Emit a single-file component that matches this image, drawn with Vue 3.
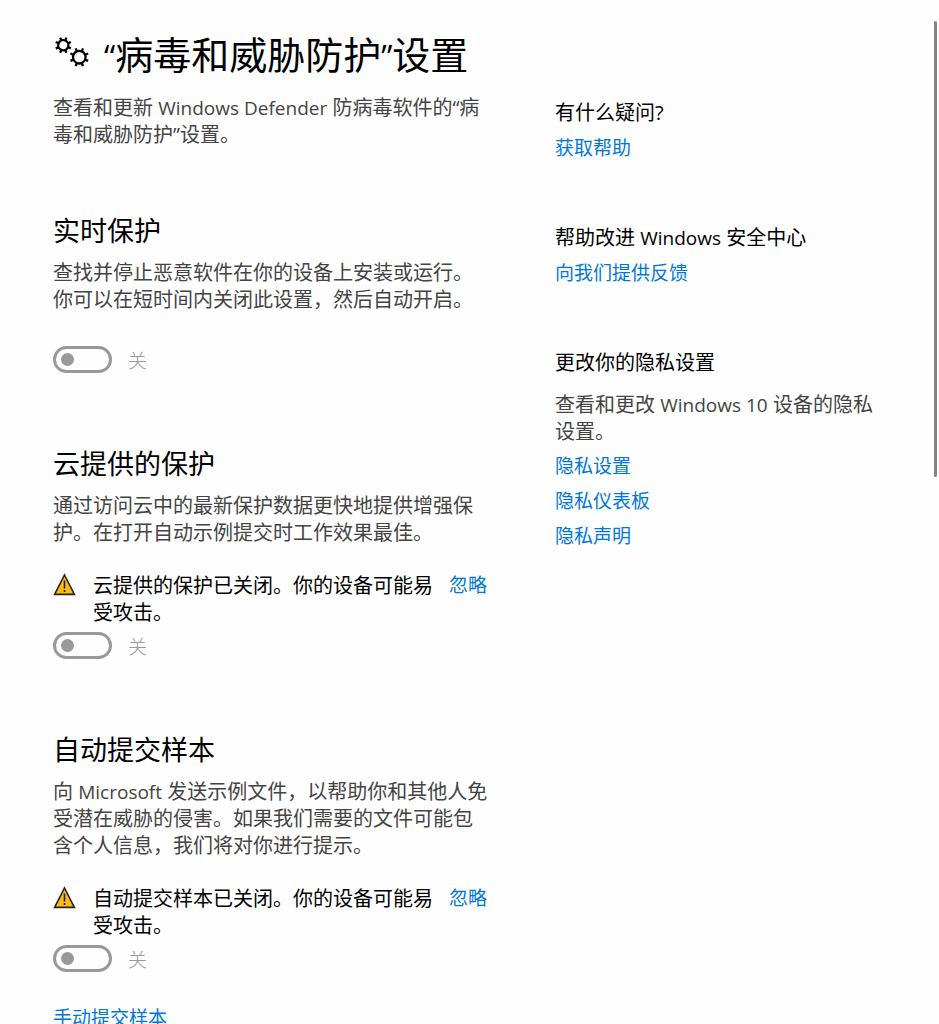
<script setup>
import { h, ref } from 'vue'

// Wraps Latin words so that they can be set slightly smaller than the Chinese text.
const MixedText = (props) =>
  props.text
    .split(/([A-Za-z][A-Za-z0-9 ]*[A-Za-z0-9])/)
    .filter(Boolean)
    .map((part) => (/^[A-Za-z]/.test(part) ? h('span', { class: 'latin' }, part) : part))
MixedText.props = ['text']

const gears = [
  { x: 10.3, y: 9.2, r: 5.1, outer: 8.2 },
  { x: 26.3, y: 21.2, r: 6.3, outer: 9.6 }
]

const sections = ref([
  {
    id: 'realtime',
    title: '实时保护',
    text: '查找并停止恶意软件在你的设备上安装或运行。你可以在短时间内关闭此设置，然后自动开启。',
    warning: '',
    on: false
  },
  {
    id: 'cloud',
    title: '云提供的保护',
    text: '通过访问云中的最新保护数据更快地提供增强保护。在打开自动示例提交时工作效果最佳。',
    warning: '云提供的保护已关闭。你的设备可能易受攻击。',
    on: false
  },
  {
    id: 'sample',
    title: '自动提交样本',
    text: '向 Microsoft 发送示例文件，以帮助你和其他人免受潜在威胁的侵害。如果我们需要的文件可能包含个人信息，我们将对你进行提示。',
    warning: '自动提交样本已关闭。你的设备可能易受攻击。',
    on: false,
    link: '手动提交样本'
  }
])

const asides = [
  { title: '有什么疑问?', links: ['获取帮助'] },
  { title: '帮助改进 Windows 安全中心', links: ['向我们提供反馈'] },
  {
    title: '更改你的隐私设置',
    text: '查看和更改 Windows 10 设备的隐私设置。',
    links: ['隐私设置', '隐私仪表板', '隐私声明']
  }
]
</script>

<template>
  <div class="window" lang="zh-CN">
    <div class="page">
      <main>
        <header>
          <h1>
            <svg class="gears" viewBox="0 0 37 36" aria-hidden="true">
              <g v-for="g in gears" :key="g.x" :transform="`translate(${g.x} ${g.y}) rotate(22.5)`">
                <circle :r="g.r" />
                <line v-for="n in 8" :key="n" :x1="g.r" y1="0" :x2="g.outer" y2="0" :transform="`rotate(${n * 45})`" />
              </g>
            </svg>
            <span><span class="quote">“</span>病毒和威胁防护<span class="quote">”</span>设置</span>
          </h1>
          <p><MixedText text="查看和更新 Windows Defender 防病毒软件的“病毒和威胁防护”设置。" /></p>
        </header>

        <section v-for="s in sections" :key="s.id" :class="{ first: s.id === 'realtime' }">
          <h2>{{ s.title }}</h2>
          <p><MixedText :text="s.text" /></p>
          <div v-if="s.warning" class="warning">
            <svg class="alert" viewBox="0 0 24 24" aria-hidden="true">
              <path class="tri" d="M11.5 3 L21.4 22.4 H1.6 Z" />
              <path class="mark" d="M11.5 8.5 V16.5 M11.5 18 V20" />
            </svg>
            <span class="message">{{ s.warning }}</span>
            <a href="#">忽略</a>
          </div>
          <label class="toggle" :class="{ close: s.warning }">
            <input v-model="s.on" type="checkbox" role="switch" :aria-label="s.title" />
            <span class="state">{{ s.on ? '开' : '关' }}</span>
          </label>
          <a v-if="s.link" class="more" href="#">{{ s.link }}</a>
        </section>
      </main>

      <aside>
        <section v-for="a in asides" :key="a.title">
          <h3><MixedText :text="a.title" /></h3>
          <p v-if="a.text"><MixedText :text="a.text" /></p>
          <a v-for="l in a.links" :key="l" href="#">{{ l }}</a>
        </section>
      </aside>
    </div>
    <div class="thumb"></div>
  </div>
</template>

<style>
body {
  margin: 0;
  background: #fefefe;
}
.latin {
  font-size: 19px;
  line-height: 20px;
}
</style>

<style scoped>
.window {
  position: relative;
  height: 100vh;
  overflow: hidden;
  font-family: "Open Sans", "Noto Sans CJK SC", sans-serif;
  font-size: 20px;
  line-height: 27px;
  color: #000;
}
.page {
  box-sizing: border-box;
  height: 100%;
  overflow-y: auto;
  scrollbar-width: none;
  display: grid;
  grid-template-columns: minmax(0, 439fr) minmax(0, 332fr);
  align-items: start;
  gap: 63px;
  padding: 30px 52px 0 53px;
}
h1,
h2,
h3,
p {
  margin: 0;
  font-weight: 400;
}
h1 {
  display: flex;
  align-items: center;
  gap: 14px;
  font-size: 38px;
  line-height: 48px;
  white-space: nowrap;
}
.quote {
  font-size: 32px;
  line-height: 40px;
}
.gears {
  flex: none;
  width: 37px;
  height: 36px;
  fill: none;
  stroke: #000;
  stroke-width: 2.3;
}
header p {
  margin-top: 16px;
}
p {
  color: #444;
}
main section {
  margin-top: 73px;
}
main section.first {
  margin-top: 65px;
}
h2 {
  margin-bottom: 10px;
  font-size: 27px;
  line-height: 36px;
}
.warning {
  display: flex;
  align-items: flex-start;
  margin-top: 26px;
}
.alert {
  flex: none;
  width: 24px;
  height: 24px;
  margin-right: 16px;
}
.tri {
  fill: #ffb90f;
  stroke: #222;
  stroke-width: 1.6;
}
.mark {
  stroke: #222;
  stroke-width: 1.6;
}
.message {
  flex: 0 1 340px;
  margin-right: 16px;
}
.warning a {
  flex: none;
}
.toggle {
  display: flex;
  align-items: center;
  gap: 16px;
  width: max-content;
  margin-top: 33px;
  font-size: 19px;
  color: #999;
}
.toggle.close {
  margin-top: 6px;
}
.state {
  padding-top: 3px;
  font-weight: 300;
  line-height: 24px;
}
.toggle input {
  appearance: none;
  box-sizing: border-box;
  display: flex;
  align-items: center;
  width: 59px;
  height: 27px;
  margin: 0;
  padding: 0 5px;
  border: 3px solid #999;
  border-radius: 14px;
}
.toggle input::before {
  content: "";
  width: 13px;
  height: 13px;
  border-radius: 50%;
  background: #999;
}
.toggle input:checked {
  justify-content: flex-end;
}
a {
  font-size: 19px;
  color: #0078d7;
  text-decoration: none;
}
.more {
  display: block;
  width: max-content;
  margin-top: 33px;
}
aside {
  display: grid;
  gap: 61px;
  padding-top: 68px;
}
aside section {
  display: flex;
  flex-direction: column;
  align-items: flex-start;
  gap: 8px;
}
h3 {
  font-size: 20px;
  line-height: 29px;
}
aside p {
  margin-top: 6px;
}
.thumb {
  position: absolute;
  top: 21px;
  right: 2px;
  width: 3px;
  height: 456px;
  border-radius: 2px;
  background: #858585;
}
</style>
